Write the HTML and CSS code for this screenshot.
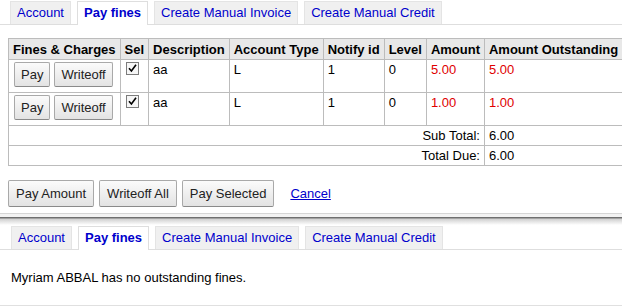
FILE: index.html
```html
<!DOCTYPE html>
<html>
<head>
<meta charset="utf-8">
<link rel="stylesheet" href="styles.css">
</head>
<body>
<div class="shot shot-top">
  <ul class="tabs">
    <li class="tab"><a href="#">Account</a></li>
    <li class="tab active"><a href="#">Pay fines</a></li>
    <li class="tab"><a href="#">Create Manual Invoice</a></li>
    <li class="tab"><a href="#">Create Manual Credit</a></li>
  </ul>
  <table class="fines">
    <thead>
      <tr>
        <th>Fines &amp; Charges</th>
        <th>Sel</th>
        <th>Description</th>
        <th>Account Type</th>
        <th>Notify id</th>
        <th>Level</th>
        <th>Amount</th>
        <th>Amount Outstanding</th>
      </tr>
    </thead>
    <tbody>
      <tr>
        <td><span class="cellbtns"><button class="btn">Pay</button><button class="btn">Writeoff</button></span></td>
        <td><span class="check"><svg width="13" height="13" viewBox="0 0 13 13"><rect x="0.5" y="0.5" width="12" height="12" fill="#f6f6f6" stroke="#7c7c7c"/><path d="M3 6.3 L5.4 9 L10 2.8" fill="none" stroke="#000" stroke-width="1.6"/></svg></span></td>
        <td>aa</td>
        <td>L</td>
        <td>1</td>
        <td>0</td>
        <td class="debit">5.00</td>
        <td class="debit">5.00</td>
      </tr>
      <tr>
        <td><span class="cellbtns"><button class="btn">Pay</button><button class="btn">Writeoff</button></span></td>
        <td><span class="check"><svg width="13" height="13" viewBox="0 0 13 13"><rect x="0.5" y="0.5" width="12" height="12" fill="#f6f6f6" stroke="#7c7c7c"/><path d="M3 6.3 L5.4 9 L10 2.8" fill="none" stroke="#000" stroke-width="1.6"/></svg></span></td>
        <td>aa</td>
        <td>L</td>
        <td>1</td>
        <td>0</td>
        <td class="debit">1.00</td>
        <td class="debit">1.00</td>
      </tr>
      <tr>
        <td colspan="7" class="label">Sub Total:</td>
        <td>6.00</td>
      </tr>
      <tr>
        <td colspan="7" class="label">Total Due:</td>
        <td>6.00</td>
      </tr>
    </tbody>
  </table>
  <div class="actions">
    <button class="btn big">Pay Amount</button>
    <button class="btn big">Writeoff All</button>
    <button class="btn big">Pay Selected</button>
    <a href="#" class="cancel">Cancel</a>
  </div>
</div>
<div class="divider"></div>
<div class="shot shot-bottom">
  <ul class="tabs">
    <li class="tab"><a href="#">Account</a></li>
    <li class="tab active"><a href="#">Pay fines</a></li>
    <li class="tab"><a href="#">Create Manual Invoice</a></li>
    <li class="tab"><a href="#">Create Manual Credit</a></li>
  </ul>
  <p class="message">Myriam ABBAL has no outstanding fines.</p>
</div>
</body>
</html>
```

FILE: styles.css
```css
html, body {
  margin: 0;
  padding: 0;
  background: #fff;
}
body {
  font-family: "Liberation Sans", Arial, sans-serif;
  font-size: 13px;
  line-height: 15px;
  color: #000;
}
.shot-top {
  height: 213px;
  padding-top: 1px;
  box-sizing: border-box;
}
.tabs {
  list-style: none;
  margin: 0;
  padding: 0 0 0 10px;
  display: flex;
  gap: 6px;
  border-bottom: 1px solid #dedede;
}
.shot-bottom .tabs {
  padding-left: 11px;
}
.tab {
  background: #f0f0f0;
  border: 1px solid #e4e4e4;
  border-bottom: 0;
  padding: 3px 6px 4px;
}
.tab a {
  color: #0000cc;
  text-decoration: none;
}
.tab.active {
  background: #fff;
  border-color: #dedede;
  margin-bottom: -1px;
  padding-bottom: 5px;
}
.tab.active a {
  font-weight: bold;
}
.fines {
  margin: 13px 0 0 8px;
  border-collapse: collapse;
}
.fines th, .fines td {
  border: 1px solid #bcbcbc;
  padding: 3px 4px 2px 4px;
  text-align: left;
  vertical-align: top;
  white-space: nowrap;
}
.fines th {
  background: #e8e8e8;
  font-weight: bold;
}
.fines td {
  padding-top: 2px;
  padding-bottom: 2px;
}
.fines td.label {
  text-align: right;
}
.debit {
  color: #e00000;
}
.cellbtns {
  display: flex;
  gap: 4px;
  padding: 0 0 3px 1px;
}
.check {
  display: block;
  width: 13px;
  height: 13px;
  margin: 0 0 0 1px;
}
.check svg {
  display: block;
}
.btn {
  font-family: "Liberation Sans", Arial, sans-serif;
  font-size: 13px;
  line-height: 15px;
  color: #222;
  padding: 4px 6px;
  border: 1px solid #a9a9a9;
  border-bottom-color: #8a8a8a;
  border-radius: 2px;
  background: linear-gradient(#fbfbfb, #e3e3e3);
  margin: 0;
}
.btn.big {
  padding: 5px 7px 5px;
}
.actions {
  display: flex;
  align-items: flex-start;
  gap: 5px;
  margin: 14px 0 0 8px;
}
.cancel {
  color: #0000cc;
  text-decoration: underline;
  margin-left: 11px;
  padding-top: 6px;
}
.divider {
  height: 13px;
  background: linear-gradient(to bottom, #d6d6d6 0, #d6d6d6 1px, #f3f3f3 1px, #f3f3f3 4px, #6f6f6f 4px, #6f6f6f 5px, #a3a3a3 5px, #a3a3a3 6px, #d0d0d0 6px, #fff 12px);
}
.shot-bottom {
  height: 79px;
  border-bottom: 1px solid #e0e0e0;
}
.message {
  margin: 20px 0 0 11px;
}
```
